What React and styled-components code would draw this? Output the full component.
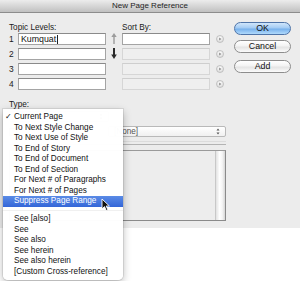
import React from "react";
import styled, { createGlobalStyle } from "styled-components";

const Global = createGlobalStyle`
  html, body { margin: 0; padding: 0; background: #ffffff; }
  body { width: 300px; height: 281px; overflow: hidden; font-family: "Liberation Sans", Arial, sans-serif; }
`;

const Stage = styled.div`
  position: relative;
  width: 300px;
  height: 281px;
`;

const Window = styled.div`
  width: 300px;
  height: 228px;
  background: #ececec;
  display: flex;
  flex-direction: column;
`;

const TitleBar = styled.div`
  height: 12px;
  line-height: 12px;
  border-bottom: 1px solid #8c8c8c;
  background: linear-gradient(#ececec, #d2d2d2 60%, #c0c0c0);
  text-align: center;
  font-size: 8px;
  color: #1e1e1e;
`;

const Body = styled.div`
  padding: 10px 0 0 9px;
  display: flex;
  flex-direction: column;
`;

const Top = styled.div`
  display: flex;
  align-items: flex-start;
`;

const FieldGrid = styled.div`
  display: grid;
  grid-template-columns: 9px 88px 16px 88px 14px;
  grid-template-rows: 10px repeat(4, 15px);
  align-items: start;
`;

const Label = styled.div`
  font-size: 8.2px;
  line-height: 10px;
  color: #1a1a1a;
  grid-column: ${(p) => p.$col || "auto"};
  white-space: nowrap;
`;

const Num = styled.div`
  font-size: 8.4px;
  line-height: 12px;
  color: #1a1a1a;
`;

const Input = styled.div`
  height: 12px;
  box-sizing: border-box;
  border: 1px solid ${(p) => (p.$disabled ? "#d6d6d6" : "#a4a4a4")};
  border-top-color: ${(p) => (p.$disabled ? "#cecece" : "#8a8a8a")};
  background: ${(p) => (p.$disabled ? "#efefef" : "#ffffff")};
  font-size: 8.8px;
  line-height: 10px;
  padding-left: 2px;
  color: #111;
  display: flex;
  align-items: center;
`;

const Caret = styled.span`
  display: inline-block;
  width: 1px;
  height: 9px;
  background: #222;
  margin-left: 1px;
`;

const ArrowCell = styled.div`
  height: 12px;
  display: flex;
  justify-content: center;
`;

const CircleCell = styled.div`
  height: 12px;
  display: flex;
  align-items: center;
  justify-content: flex-end;
`;

const Buttons = styled.div`
  margin-left: 10px;
  margin-top: -1px;
  display: flex;
  flex-direction: column;
`;

const Button = styled.div`
  width: 57px;
  height: 13px;
  box-sizing: border-box;
  border-radius: 7px;
  margin-top: ${(p) => p.$gap || 0}px;
  border: 1px solid ${(p) => (p.$primary ? "#4f74a8" : "#8d8d8d")};
  background: ${(p) =>
    p.$primary
      ? "linear-gradient(#d0e6fb, #a3cbf3 45%, #78b1ec 55%, #b0dafc)"
      : "linear-gradient(#ffffff, #f3f3f3 45%, #e4e4e4 55%, #fbfbfb)"};
  font-size: 8.8px;
  line-height: 11px;
  text-align: center;
  color: #111;
`;

const Lower = styled.div`
  width: 217px;
  margin-top: 7px;
  display: flex;
  flex-direction: column;
`;

const Popup = styled.div`
  height: 11px;
  box-sizing: border-box;
  width: ${(p) => p.$w}px;
  border: 1px solid #b9b9b9;
  border-radius: 2px;
  background: linear-gradient(#ffffff, #f0f0f0);
  font-size: 8.2px;
  line-height: 9px;
  padding-left: 5px;
  color: #555;
  display: flex;
  align-items: center;
  justify-content: space-between;
`;

const Row = styled.div`
  display: flex;
  align-items: center;
  justify-content: space-between;
  margin-top: ${(p) => p.$mt || 0}px;
`;

const Check = styled.span`
  width: 8px;
  height: 8px;
  box-sizing: border-box;
  border: 1px solid #999;
  background: #fff;
  display: inline-block;
`;

const Divider = styled.div`
  margin-top: 4px;
  height: 2px;
  border-top: 1px solid #dcdcdc;
  border-bottom: 1px solid #b3b3b3;
`;

const ListBox = styled.div`
  margin-top: 5px;
  height: 71px;
  box-sizing: border-box;
  border: 1px solid #8a8a8a;
  border-top-color: #9a9a9a;
  background: #ededed;
  display: flex;
  justify-content: flex-end;
`;

const Scroll = styled.div`
  width: 9px;
  background: linear-gradient(90deg, #e2e2e2, #ffffff 40%, #f4f4f4 70%, #d6d6d6);
  border-left: 1px solid #c8c8c8;
`;

const Menu = styled.div`
  position: absolute;
  left: 3px;
  top: 109px;
  width: 120px;
  padding: 3px 0 3px;
  background: rgba(255, 255, 255, 0.98);
  border-radius: 0 0 5px 5px;
  box-shadow: 0 3px 9px rgba(0, 0, 0, 0.28), 0 0 0 1px rgba(0, 0, 0, 0.08);
  font-size: 8.2px;
  color: #111;
`;

const Item = styled.div`
  position: relative;
  height: 10.5px;
  line-height: 10.5px;
  padding-left: 11px;
  white-space: nowrap;
  color: ${(p) => (p.$active ? "#fff" : "#111")};
  background: ${(p) => (p.$active ? "linear-gradient(#5a8be6, #3466d8)" : "transparent")};
`;

const Tick = styled.span`
  position: absolute;
  left: 2px;
  top: 0;
`;

const Sep = styled.div`
  height: 7.5px;
  display: flex;
  align-items: center;
  &::after {
    content: "";
    flex: 1;
    height: 1px;
    background: #f0f0f0;
  }
`;

const Pointer = styled.svg`
  position: absolute;
  left: 101px;
  top: 198px;
`;

const UpArrow = () => (
  <svg width="6" height="11" viewBox="0 0 6 11">
    <rect x="2.3" y="3" width="1.4" height="8" fill="#9c9c9c" />
    <polygon points="0.3,4 3,0 5.7,4" fill="#9c9c9c" />
  </svg>
);

const DownArrow = () => (
  <svg width="6" height="11" viewBox="0 0 6 11">
    <rect x="2" y="0" width="2" height="8" fill="#2a2a2a" />
    <polygon points="0.2,6.5 3,11 5.8,6.5" fill="#2a2a2a" />
  </svg>
);

const CircleBtn = () => (
  <svg width="8" height="8" viewBox="0 0 8 8">
    <defs>
      <radialGradient id="cg" cx="50%" cy="35%" r="60%">
        <stop offset="0" stopColor="#ffffff" />
        <stop offset="1" stopColor="#dcdcdc" />
      </radialGradient>
    </defs>
    <circle cx="4" cy="4" r="3.5" fill="url(#cg)" stroke="#b9b9b9" strokeWidth="0.8" />
    <polygon points="3.2,2.5 5.4,4 3.2,5.5" fill="#8a8a8a" />
  </svg>
);

const Stepper = () => (
  <svg width="6" height="9" viewBox="0 0 6 9" style={{ marginRight: 4 }}>
    <polygon points="1.5,3.5 3,1.5 4.5,3.5" fill="#555" />
    <polygon points="1.5,5.5 3,7.5 4.5,5.5" fill="#555" />
  </svg>
);

const topics = ["Kumquat", "", "", ""];

const items1 = [
  "Current Page",
  "To Next Style Change",
  "To Next Use of Style",
  "To End of Story",
  "To End of Document",
  "To End of Section",
  "For Next # of Paragraphs",
  "For Next # of Pages",
  "Suppress Page Range",
];
const items2 = ["See [also]", "See", "See also", "See herein", "See also herein", "[Custom Cross-reference]"];

export default function App() {
  return (
    <Stage>
      <Global />
      <Window>
        <TitleBar>New Page Reference</TitleBar>
        <Body>
          <Top>
            <FieldGrid>
              <Label $col="1 / 3">Topic Levels:</Label>
              <Label $col="4 / 6">Sort By:</Label>
              {topics.map((t, i) => (
                <React.Fragment key={i}>
                  <Num>{i + 1}</Num>
                  <Input>
                    {t}
                    {i === 0 && <Caret />}
                  </Input>
                  <ArrowCell>{i === 0 ? <UpArrow /> : i === 1 ? <DownArrow /> : null}</ArrowCell>
                  <Input $disabled={i !== 0} />
                  <CircleCell>
                    <CircleBtn />
                  </CircleCell>
                </React.Fragment>
              ))}
            </FieldGrid>
            <Buttons>
              <Button $primary>OK</Button>
              <Button $gap={5}>Cancel</Button>
              <Button $gap={7}>Add</Button>
            </Buttons>
          </Top>
          <Lower>
            <Label>Type:</Label>
            <Row $mt={1}>
              <Popup $w={100}>
                <span />
                <Stepper />
              </Popup>
            </Row>
            <Row $mt={4}>
              <Check />
              <Popup $w={118}>
                [None]
                <Stepper />
              </Popup>
            </Row>
            <Divider />
            <ListBox>
              <Scroll />
            </ListBox>
          </Lower>
        </Body>
      </Window>
      <Menu>
        {items1.map((t, i) => (
          <Item key={t} $active={i === items1.length - 1}>
            {i === 0 && <Tick>✓</Tick>}
            {t}
          </Item>
        ))}
        <Sep />
        {items2.map((t) => (
          <Item key={t}>{t}</Item>
        ))}
      </Menu>
      <Pointer width="9" height="14" viewBox="0 0 9 14">
        <polygon points="1,1 1,11 3.5,8.6 5.3,12.6 6.9,11.9 5.2,8 8.4,8" fill="#111" stroke="#fff" strokeWidth="0.9" strokeLinejoin="round" />
      </Pointer>
    </Stage>
  );
}
